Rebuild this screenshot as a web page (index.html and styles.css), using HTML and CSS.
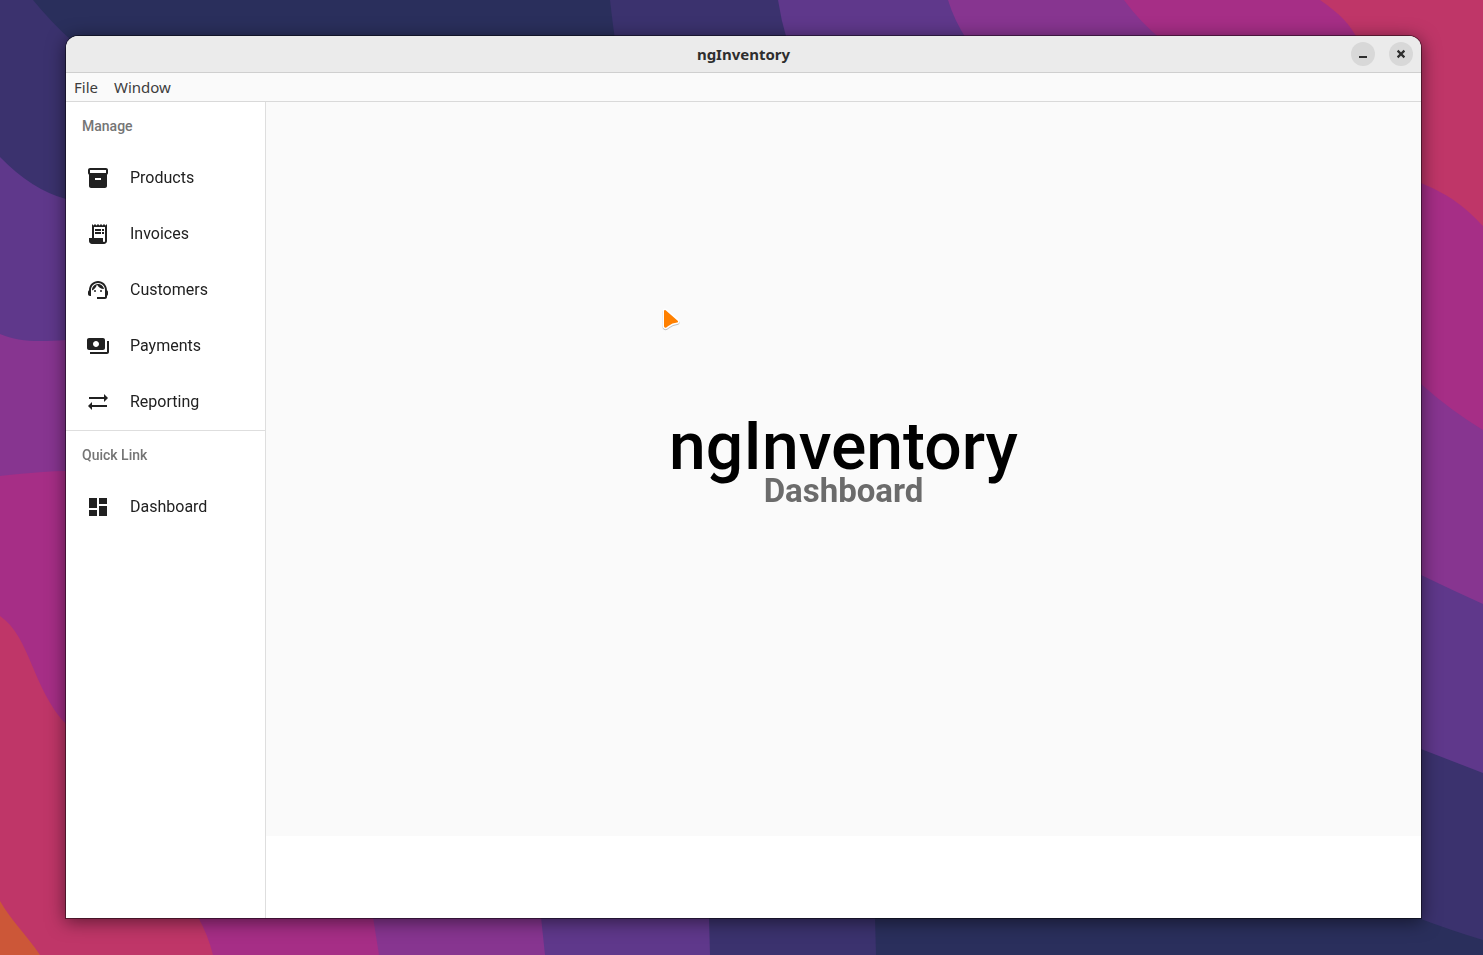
FILE: index.html
```html
<!DOCTYPE html>
<html lang="en">
<head>
<meta charset="utf-8">
<meta name="viewport" content="width=device-width, initial-scale=1">
<title>ngInventory</title>
<link rel="stylesheet" href="styles.css">
</head>
<body class="desktop">
<svg class="wallpaper" viewBox="0 0 1483 955" preserveAspectRatio="none" aria-hidden="true">
  <rect width="1483" height="955" fill="#2a2f5c"/>
  <path fill="#3b326e" d="M610 0Q612 18 615 40L700 500L1421 919Q1450 930 1483 940V0Z"/>
  <path fill="#5f388b" d="M778 0Q781 20 787 40L900 400L1421 749L1483 773V0Z"/>
  <path fill="#873590" d="M948 0Q954 20 967 40L1100 400L1421 575Q1452 590 1483 604V0Z"/>
  <path fill="#a62e86" d="M1124 0Q1140 22 1162 40L1300 300L1421 384Q1450 410 1483 430V0Z"/>
  <path fill="#bf3668" d="M1320 0C1340 14 1350 24 1358 40L1400 176L1421 183C1452 196 1466 208 1483 226V0Z"/>
  <path fill="#3b326e" d="M33 0Q51 22 73 42L300 300L875 917L876 955H0V0Z"/>
  <path fill="#5f388b" d="M0 157Q32 190 66 199L400 400L709 917L710 955H0Z"/>
  <path fill="#873590" d="M0 334C18 342 38 342 66 340L300 500L541 917L545 955H0Z"/>
  <path fill="#a62e86" d="M0 476Q46 471 66 471L300 700L373 917L379 955H0Z"/>
  <path fill="#bf3668" d="M0 616C30 636 33 690 66 724L198 917Q208 935 213 955H0Z"/>
  <path fill="#cc5738" d="M0 901C12 922 26 934 40 955H0Z"/>
</svg>

<div class="window">
  <header class="titlebar">
    <div class="titlebar-title">ngInventory</div>
    <div class="titlebar-actions">
      <button class="window-button" type="button" aria-label="Minimize">
        <svg width="16" height="16" viewBox="0 0 16 16"><path fill="currentColor" d="M4 10h8v2H4z"/></svg>
      </button>
      <button class="window-button" type="button" aria-label="Close">
        <svg width="16" height="16" viewBox="0 0 16 16"><path fill="none" stroke="currentColor" stroke-width="2.200" d="M4.600 4.600l6.800 6.800M11.400 4.600l-6.800 6.800"/></svg>
      </button>
    </div>
  </header>

  <div class="menubar">
    <button class="menu-button" type="button">File</button>
    <button class="menu-button" type="button">Window</button>
  </div>

  <div class="app">
    <nav class="sidebar" aria-label="Main">
      <h3 class="nav-heading">Manage</h3>
      <a class="nav-item" href="#products">
        <svg class="nav-icon" viewBox="0 0 24 24"><path fill-rule="evenodd" d="M20 2H4c-1 0-2 .9-2 2v3.010c0 .72.43 1.340 1 1.690V20c0 1.100 1.100 2 2 2h14c.9 0 2-.9 2-2V8.700c.57-.35 1-.97 1-1.690V4c0-1.100-1-2-2-2zm-5 12H9v-2h6v2zm5-7H4V4h16v3z"/></svg>
        <span>Products</span>
      </a>
      <a class="nav-item" href="#invoices">
        <svg class="nav-icon" viewBox="0 0 24 24"><path d="M19.500 3.500L18 2l-1.500 1.500L15 2l-1.500 1.500L12 2l-1.500 1.500L9 2 7.500 3.500 6 2v14H3v3c0 1.660 1.340 3 3 3h12c1.660 0 3-1.340 3-3V2l-1.500 1.500zM19 19c0 .55-.45 1-1 1s-1-.45-1-1v-3H8V5h11v14z"/><path d="M9 7h6v2H9zM16 7h2v2h-2zM9 10h6v2H9zM16 10h2v2h-2z"/></svg>
        <span>Invoices</span>
      </a>
      <a class="nav-item" href="#customers">
        <svg class="nav-icon" viewBox="0 0 24 24"><path d="M21 12.220C21 6.730 16.740 3 12 3c-4.690 0-9 3.650-9 9.280-.6.340-1 .98-1 1.720v2c0 1.100.9 2 2 2h1v-6.100c0-3.870 3.130-7 7-7s7 3.130 7 7V19h-8v2h8c1.100 0 2-.9 2-2v-1.220c.59-.31 1-.92 1-1.640v-2.300c0-.7-.41-1.310-1-1.620z"/><circle cx="9" cy="13" r="1"/><circle cx="15" cy="13" r="1"/><path d="M18 11.030C17.520 8.180 15.040 6 12.050 6c-3.030 0-6.290 2.510-6.030 6.450 2.470-1.010 4.330-3.210 4.860-5.890 1.310 2.630 4 4.440 7.120 4.470z"/></svg>
        <span>Customers</span>
      </a>
      <a class="nav-item" href="#payments">
        <svg class="nav-icon" viewBox="0 0 24 24"><path fill-rule="evenodd" d="M19 14V6c0-1.100-.9-2-2-2H3c-1.100 0-2 .9-2 2v8c0 1.100.9 2 2 2h14c1.100 0 2-.9 2-2zm-9-1c-1.660 0-3-1.340-3-3s1.340-3 3-3 3 1.340 3 3-1.340 3-3 3zm13-6v11c0 1.100-.9 2-2 2H4v-2h17V7h2z"/></svg>
        <span>Payments</span>
      </a>
      <a class="nav-item" href="#reporting">
        <svg class="nav-icon" viewBox="0 0 24 24"><path d="M22 8l-4-4v3H3v2h15v3l4-4zM2 16l4 4v-3h15v-2H6v-3l-4 4z"/></svg>
        <span>Reporting</span>
      </a>
      <hr class="nav-divider">
      <h3 class="nav-heading">Quick Link</h3>
      <a class="nav-item" href="#dashboard">
        <svg class="nav-icon" viewBox="0 0 24 24"><path d="M3 13h8V3H3v10zm0 8h8v-6H3v6zm10 0h8V11h-8v10zm0-18v6h8V3h-8z"/></svg>
        <span>Dashboard</span>
      </a>
    </nav>

    <main class="content">
      <div class="hero">
        <h1 class="hero-title">ngInventory</h1>
        <h2 class="hero-subtitle">Dashboard</h2>
      </div>
    </main>
  </div>
</div>

<svg class="pointer" viewBox="0 0 20 24" aria-hidden="true">
  <path d="M5 4L17 14.500C11 15 9.500 17 6 19.500Q5 20 5 19Z" transform="translate(0 1)" fill="none" stroke="#777" stroke-width="5" stroke-linejoin="round" opacity=".45"/>
  <path d="M5 4L17 14.500C11 15 9.500 17 6 19.500Q5 20 5 19Z" fill="none" stroke="#fff" stroke-width="5" stroke-linejoin="round"/>
  <path d="M5 4L17 14.500C11 15 9.500 17 6 19.500Q5 20 5 19Z" fill="#ff8000" stroke="#ff8000" stroke-width="2" stroke-linejoin="round"/>
</svg>
</body>
</html>
```

FILE: styles.css
```css
* {
  box-sizing: border-box;
}

.desktop {
  display: flex;
  min-height: 100vh;
  margin: 0;
  padding: 36px 62px 37px 66px;
  background: #2a2f5c;
  font-family: Roboto, sans-serif;
}

.wallpaper {
  position: fixed;
  inset: 0;
  width: 100%;
  height: 100%;
}

.window {
  position: relative;
  display: flex;
  flex: 1;
  flex-direction: column;
  min-width: 0;
  overflow: hidden;
  border-radius: 12px 12px 0 0;
  background: #fff;
  box-shadow: 0 0 0 1px rgba(0, 0, 0, 0.45), 0 3px 18px 1px rgba(0, 0, 0, 0.5);
}

.titlebar {
  display: grid;
  grid-template-columns: 1fr auto 1fr;
  align-items: center;
  height: 37px;
  padding: 0 8px;
  border-bottom: 1px solid #cfcfcf;
  background: #ebebeb;
  color: #2e2e2e;
}

.titlebar-title {
  grid-column: 2;
  font: 700 15px/20px "Noto Sans", sans-serif;
}

.titlebar-actions {
  display: flex;
  justify-content: flex-end;
  gap: 14px;
}

.window-button {
  display: grid;
  place-items: center;
  width: 24px;
  height: 24px;
  padding: 0;
  border: 0;
  border-radius: 50%;
  background: #d8d8d8;
  color: #2e2e2e;
}

.menubar {
  display: flex;
  gap: 16px;
  height: 29px;
  padding: 0 8px;
  border-bottom: 1px solid #d9d9d9;
  background: #fafafa;
}

.menu-button {
  padding: 0;
  border: 0;
  background: none;
  color: #3d3d3d;
  font: 15px/20px "Noto Sans", sans-serif;
}

.app {
  display: flex;
  flex: 1;
}

.sidebar {
  width: 200px;
  border-right: 1px solid #dedede;
  background: #fff;
}

.nav-heading {
  margin: 0;
  padding: 16px;
  color: #757575;
  font-size: 14px;
  font-weight: 500;
  line-height: 16px;
}

.nav-item {
  display: flex;
  align-items: center;
  gap: 20px;
  height: 56px;
  padding: 0 20px;
  color: #212121;
  font-size: 16px;
  line-height: 24px;
  text-decoration: none;
}

.nav-icon {
  width: 24px;
  height: 24px;
  fill: currentColor;
}

.nav-divider {
  margin: 0;
  border: 0;
  border-top: 1px solid #dedede;
}

.content {
  display: flex;
  flex: 1;
  flex-direction: column;
  padding-bottom: 82px;
}

.hero {
  display: flex;
  flex: 1;
  flex-direction: column;
  align-items: center;
  justify-content: center;
  padding-bottom: 12px;
  background: #fafafa;
}

.hero-title {
  margin: 0;
  color: #000;
  font-size: 66px;
  font-weight: 500;
  line-height: 56px;
}

.hero-subtitle {
  margin: 0;
  color: #6b6b6b;
  font-size: 33px;
  font-weight: 700;
  line-height: 32px;
}

.pointer {
  position: absolute;
  top: 307px;
  left: 660px;
  width: 20px;
  height: 24px;
}
```
